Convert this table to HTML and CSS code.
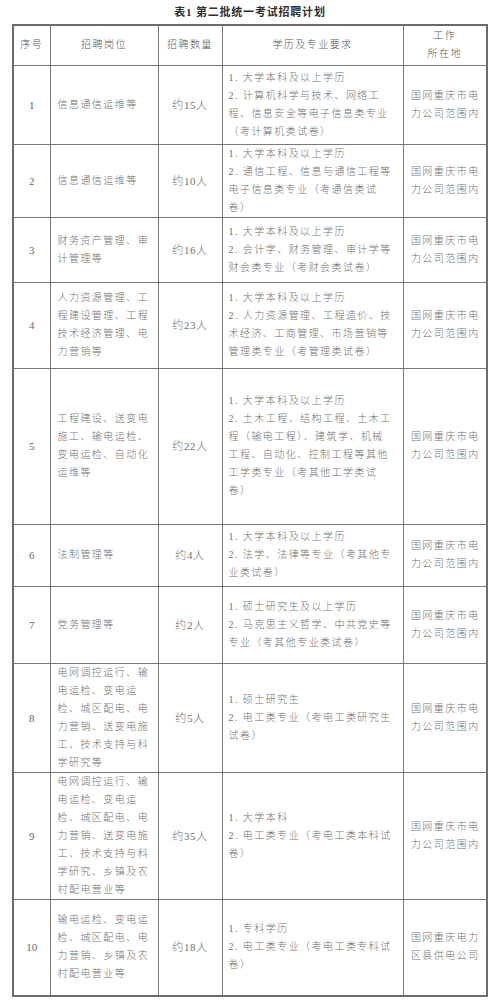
FILE: index.html
```html
<!DOCTYPE html>
<html lang="zh-CN">
<head>
<meta charset="utf-8">
<title>第二批统一考试招聘计划</title>
<link rel="stylesheet" href="styles.css">
</head>
<body>
<div class="page">
  <div class="title">表1&nbsp;第二批统一考试招聘计划</div>
  <table class="plan">
    <colgroup>
      <col class="c-no">
      <col class="c-post">
      <col class="c-num">
      <col class="c-req">
      <col class="c-loc">
    </colgroup>
    <thead>
      <tr class="h">
        <th>序号</th>
        <th>招聘岗位</th>
        <th>招聘数量</th>
        <th>学历及专业要求</th>
        <th>工作<br>所在地</th>
      </tr>
    </thead>
    <tbody>
      <tr class="r1">
        <td class="no">1</td>
        <td class="post">信息通信运维等</td>
        <td class="num">约15人</td>
        <td class="req">1. 大学本科及以上学历<br>2. 计算机科学与技术、网络工<br>程、信息安全等电子信息类专业<br>（考计算机类试卷）</td>
        <td class="loc">国网重庆市电<br>力公司范围内</td>
      </tr>
      <tr class="r2">
        <td class="no">2</td>
        <td class="post">信息通信运维等</td>
        <td class="num">约10人</td>
        <td class="req">1. 大学本科及以上学历<br>2. 通信工程、信息与通信工程等<br>电子信息类专业（考通信类试<br>卷）</td>
        <td class="loc">国网重庆市电<br>力公司范围内</td>
      </tr>
      <tr class="r3">
        <td class="no">3</td>
        <td class="post">财务资产管理、审<br>计管理等</td>
        <td class="num">约16人</td>
        <td class="req">1. 大学本科及以上学历<br>2. 会计学、财务管理、审计学等<br>财会类专业（考财会类试卷）</td>
        <td class="loc">国网重庆市电<br>力公司范围内</td>
      </tr>
      <tr class="r4">
        <td class="no">4</td>
        <td class="post">人力资源管理、工<br>程建设管理、工程<br>技术经济管理、电<br>力营销等</td>
        <td class="num">约23人</td>
        <td class="req">1. 大学本科及以上学历<br>2. 人力资源管理、工程造价、技<br>术经济、工商管理、市场营销等<br>管理类专业（考管理类试卷）</td>
        <td class="loc">国网重庆市电<br>力公司范围内</td>
      </tr>
      <tr class="r5">
        <td class="no">5</td>
        <td class="post">工程建设、送变电<br>施工、输电运检、<br>变电运检、自动化<br>运维等</td>
        <td class="num">约22人</td>
        <td class="req">1. 大学本科及以上学历<br>2. 土木工程、结构工程、土木工<br>程（输电工程）、建筑学、机械<br>工程、自动化、控制工程等其他<br>工学类专业（考其他工学类试<br>卷）</td>
        <td class="loc">国网重庆市电<br>力公司范围内</td>
      </tr>
      <tr class="r6">
        <td class="no">6</td>
        <td class="post">法制管理等</td>
        <td class="num">约4人</td>
        <td class="req">1. 大学本科及以上学历<br>2. 法学、法律等专业（考其他专<br>业类试卷）</td>
        <td class="loc">国网重庆市电<br>力公司范围内</td>
      </tr>
      <tr class="r7">
        <td class="no">7</td>
        <td class="post">党务管理等</td>
        <td class="num">约2人</td>
        <td class="req">1. 硕士研究生及以上学历<br>2. 马克思主义哲学、中共党史等<br>专业（考其他专业类试卷）</td>
        <td class="loc">国网重庆市电<br>力公司范围内</td>
      </tr>
      <tr class="r8">
        <td class="no">8</td>
        <td class="post">电网调控运行、输<br>电运检、变电运<br>检、城区配电、电<br>力营销、送变电施<br>工、技术支持与科<br>学研究等</td>
        <td class="num">约5人</td>
        <td class="req">1. 硕士研究生<br>2. 电工类专业（考电工类研究生<br>试卷）</td>
        <td class="loc">国网重庆市电<br>力公司范围内</td>
      </tr>
      <tr class="r9">
        <td class="no">9</td>
        <td class="post">电网调控运行、输<br>电运检、变电运<br>检、城区配电、电<br>力营销、送变电施<br>工、技术支持与科<br>学研究、乡镇及农<br>村配电营业等</td>
        <td class="num">约35人</td>
        <td class="req">1. 大学本科<br>2. 电工类专业（考电工类本科试<br>卷）</td>
        <td class="loc">国网重庆市电<br>力公司范围内</td>
      </tr>
      <tr class="r10">
        <td class="no">10</td>
        <td class="post">输电运检、变电运<br>检、城区配电、电<br>力营销、乡镇及农<br>村配电营业等</td>
        <td class="num">约18人</td>
        <td class="req">1. 专科学历<br>2. 电工类专业（考电工类专科试<br>卷）</td>
        <td class="loc">国网重庆电力<br>区县供电公司</td>
      </tr>
    </tbody>
  </table>
</div>
</body>
</html>
```

FILE: styles.css
```css
html, body {
  margin: 0;
  padding: 0;
  background: #ffffff;
}

.page {
  width: 500px;
  font-family: "Liberation Serif", "Noto Sans CJK SC", serif;
  color: #727272;
}

.title {
  height: 24px;
  line-height: 25px;
  text-align: center;
  font-size: 11px;
  font-weight: 600;
  letter-spacing: 0.8px;
  color: #303030;
}

.plan {
  width: 474px;
  margin: 0 auto;
  border-collapse: collapse;
  table-layout: fixed;
  border: 2px solid #6a6a6a;
}

.c-no { width: 37px; }
.c-post { width: 108px; }
.c-num { width: 64px; }
.c-req { width: 181px; }
.c-loc { width: 84px; }

.plan th,
.plan td {
  border: 1px solid #7a7a7a;
  padding: 0;
  font-size: 10px;
  font-weight: 300;
  line-height: 18px;
  letter-spacing: 1.45px;
  vertical-align: middle;
  white-space: nowrap;
  overflow: hidden;
}

.plan th {
  color: #555555;
  text-align: center;
}

.h { height: 40px; }

.plan td.no,
.plan td.num,
.plan td.loc {
  text-align: center;
}

.plan td.no {
  font-size: 11px;
  letter-spacing: 0;
  color: #666666;
}

.plan td.num {
  font-size: 11px;
  letter-spacing: 0.6px;
}

.plan td.post {
  text-align: left;
  padding-left: 7px;
}

.plan td.req {
  text-align: left;
  padding-left: 6px;
}

.plan td.loc {
  padding-left: 1px;
}

.r1 { height: 79px; }
.r2 { height: 72px; }
.r3 { height: 65px; }
.r4 { height: 86px; }
.r5 { height: 156px; }
.r6 { height: 62px; }
.r7 { height: 77px; }
.r8 { height: 109px; }
.r9 { height: 127px; }
.r10 { height: 97px; }
```
